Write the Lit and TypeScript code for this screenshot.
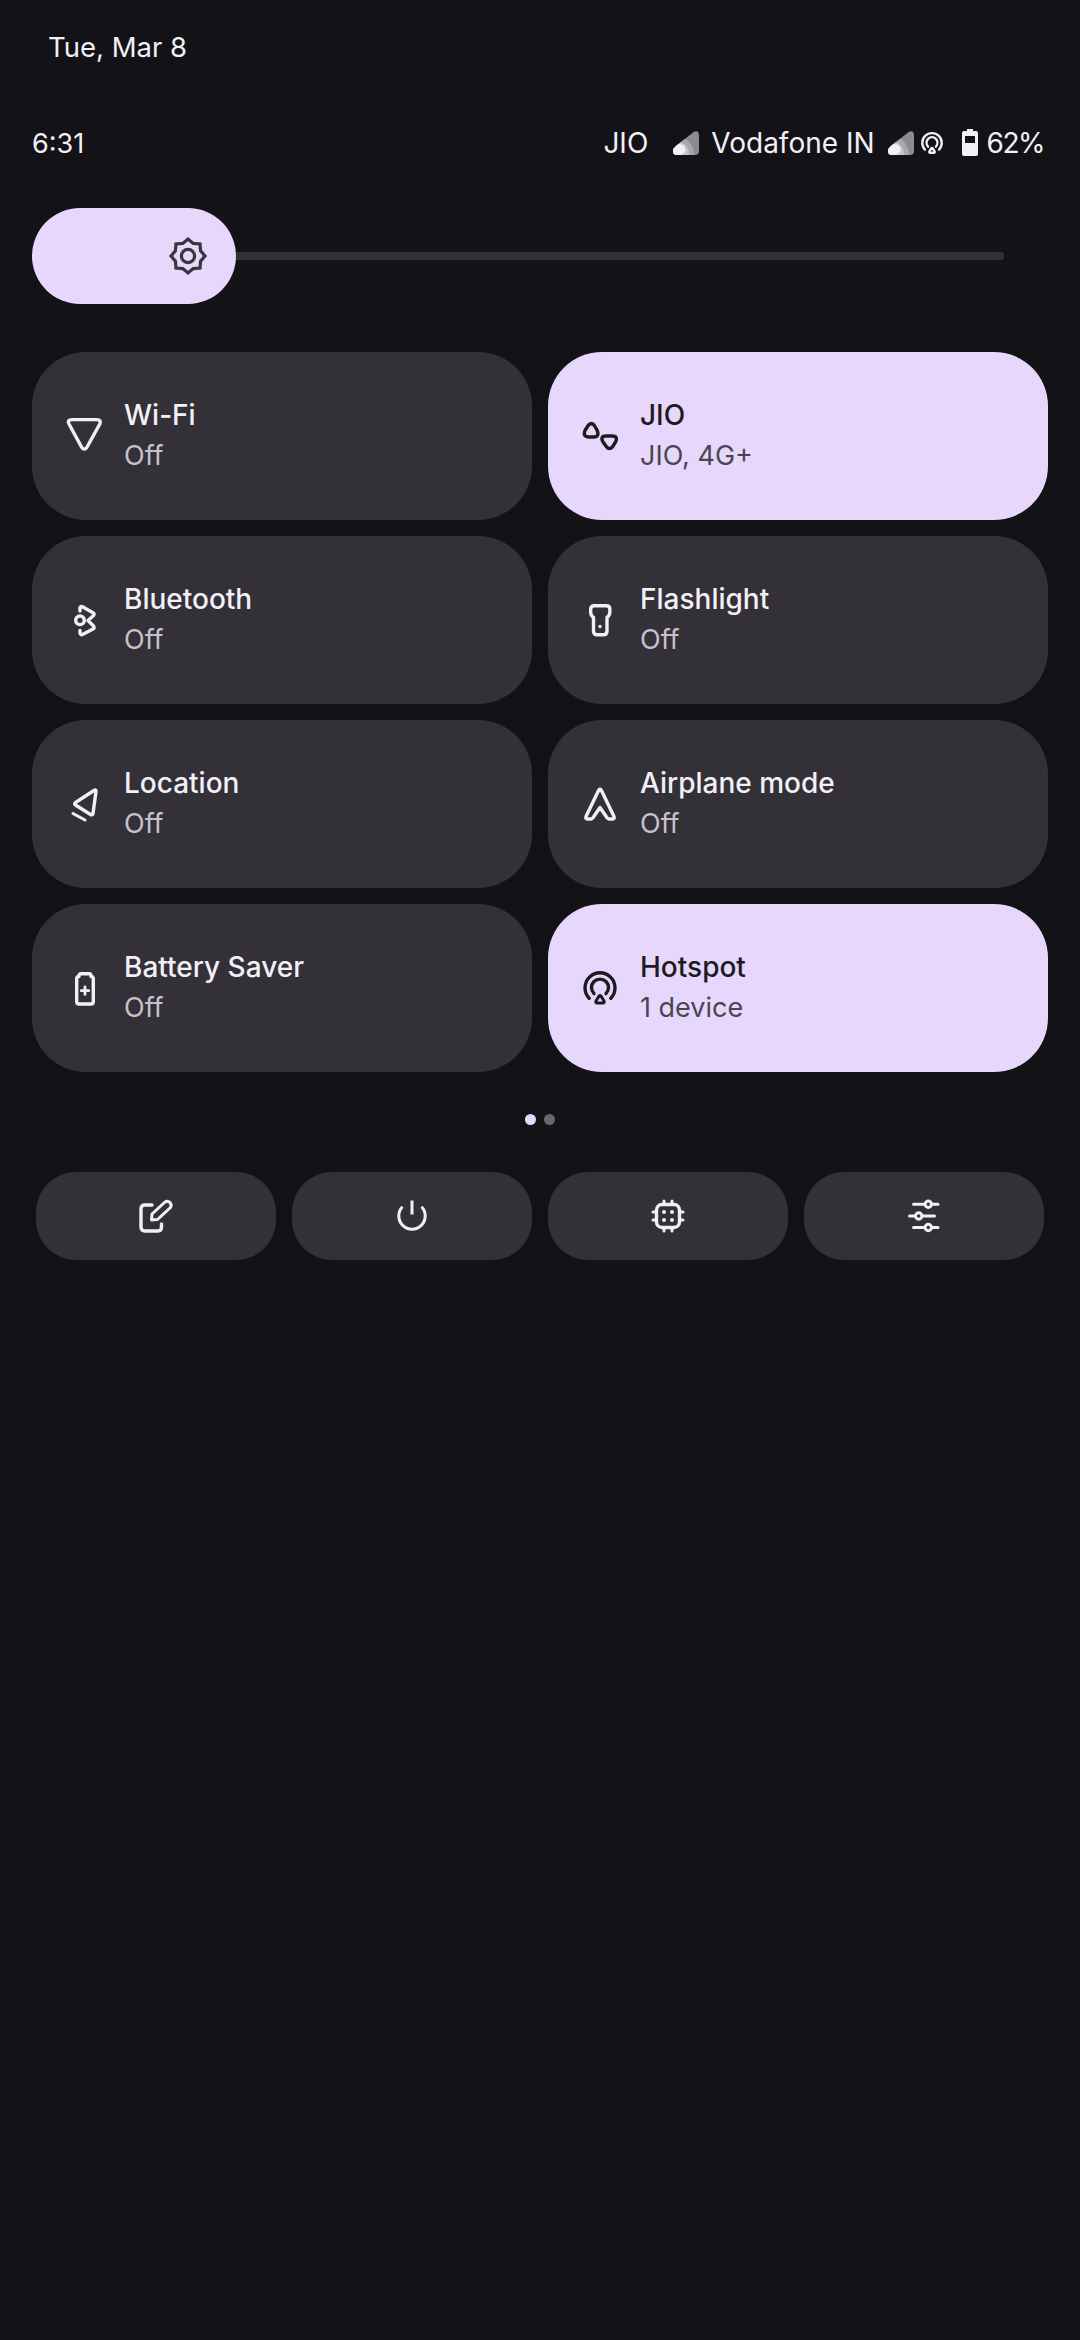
import { LitElement, html, css, svg } from "lit";
import { customElement } from "lit/decorators.js";

const s = (body: unknown) => html`<svg viewBox="0 0 40 40" width="40" height="40" fill="none" stroke="currentColor" stroke-width="3.4" stroke-linecap="round" stroke-linejoin="round">${body}</svg>`;

const icons: Record<string, unknown> = {
  wifi: s(svg`<path d="M8 3.600H32.500Q37.800 3.600 35.800 8L22.800 31.500Q20.300 34.800 17.800 31.500L5 8Q2.800 3.600 8 3.600Z"/>`),
  jio: s(svg`<path d="M8.500 9Q11.500 6.300 14 9L17 14Q20 21 13.500 21H9Q2.500 21 5 14.500Z"/><path d="M26 20H32Q38.500 20 35.500 26L32.500 30.800Q29.500 34.300 26.500 30.800L23 26Q19.800 20 26 20Z"/>`),
  bluetooth: s(svg`<circle cx="16" cy="20.300" r="4.300"/><path d="M16 11V8Q16.500 5.800 18.500 6.800L29 12.800Q31 14 29.500 15.500L24 20.500L29.500 26Q31 27.800 29 29L18.500 34.500Q16.500 35.300 16 33V30.500"/>`),
  flashlight: s(svg`<path d="M14 5.800H26.500Q29.800 5.800 29.800 9V12.500Q29.800 15.500 27 17.500V31Q27 34.800 23.500 34.800H17Q13.500 34.800 13.500 31V17.500Q10.700 15.500 10.700 12.500V9Q10.700 5.800 14 5.800Z"/><circle cx="20" cy="26.500" r="1.700" fill="currentColor" stroke="none"/>`),
  location: s(svg`<path d="M30 6.500Q32 5 32 7.500L29 29.500Q28.500 31.500 26.500 30.500L11.500 21Q9.800 19.800 11.500 18.500Z"/><path d="M9 29.500L21 36" stroke-width="3"/>`),
  airplane: s(svg`<path d="M18.800 6Q20 4.500 21.200 6L34 32.500Q34.800 35 32.500 35H28.800Q27.800 35 27.200 34L20 23.500L12.800 34Q12.200 35 11.200 35H7.500Q5.200 35 6 32.500Z"/>`),
  battery: s(svg`<path d="M16.500 5.800H25.500Q27 5.800 27 8.500H27.500Q29.300 9 29.300 11V33.500Q29.300 36 27 36H15Q12.700 36 12.700 33.500V11Q12.700 9 14.500 8.500H15Q15 5.800 16.500 5.800Z"/><path d="M21 19V26.400M17.300 22.700H24.700" stroke-width="2.800"/>`),
  hotspot: s(svg`<path d="M9.200 30.200A15 15 0 1 1 30.800 30.200"/><path d="M14 25.600A8.500 8.500 0 1 1 26 25.600"/><path d="M19 28Q20 26.800 21 28L24 33Q24.800 35 22.800 35H17.200Q15.200 35 16 33Z" stroke-width="3"/>`),
  edit: s(svg`<path d="M16 9H9Q5 9 5 13V31Q5 35 9 35H22Q25.500 35 25.500 31V28"/><path d="M15.500 24L16 18L29 6Q31.500 4.500 34 6.500Q36 9 34.500 11.500L21.500 23.500Z" stroke-width="3"/>`),
  power: s(svg`<path d="M10.500 10.800A13.200 13.200 0 1 0 29.500 10.800" stroke-linecap="butt" stroke-width="3"/><path d="M20 4.500V18.500" stroke-width="3" stroke-linecap="butt"/>`),
  cpu: s(svg`<rect x="8.500" y="8.500" width="23" height="23" rx="5.500"/><path d="M16 5V8M24 5V8M16 32V35M24 32V35M5 16H8M5 24H8M32 16H35M32 24H35" stroke-width="3"/><g fill="currentColor" stroke="none"><circle cx="16" cy="16" r="2"/><circle cx="24" cy="16" r="2"/><circle cx="16" cy="24" r="2"/><circle cx="24" cy="24" r="2"/></g>`),
  sliders: s(svg`<path d="M9.500 8.300H34M5.500 20H30.500M9.500 31.500H34" stroke-width="3"/><g fill="#333137" stroke-width="3"><circle cx="24.300" cy="8.300" r="3.200"/><circle cx="14.700" cy="20" r="3.200"/><circle cx="24.300" cy="31.500" r="3.200"/></g>`),
};

const starPoints = Array.from({ length: 16 }, (_, i) => {
  const r = i % 2 ? 13.6 : 17;
  const a = (i * Math.PI) / 8 - Math.PI / 2;
  return `${(20 + r * Math.cos(a)).toFixed(2)},${(20 + r * Math.sin(a)).toFixed(2)}`;
}).join(" ");

const signal = (id: string, cls: string) => html`<svg class=${cls} viewBox="0 0 26 24" width="26" height="24">
  <defs><clipPath id=${id}><path d="M0 20Q0 17.500 3 15L20 1.500Q26 -2 26 5V20Q26 24 22 24H4Q0 24 0 20Z"/></clipPath></defs>
  <g clip-path="url(#${id})">
    <rect width="26" height="24" fill="#8c8b90"/>
    <ellipse cx="3" cy="24" rx="18" ry="19" fill="#a9a8ac"/>
    <ellipse cx="3" cy="24" rx="13" ry="14" fill="#c8c7cb"/>
    <ellipse cx="6" cy="18.500" rx="6.500" ry="5.500" fill="#f3eff7"/>
    <rect x="0" y="19" width="7" height="5" fill="#f3eff7"/>
  </g>
</svg>`;

const tiles = [
  { icon: "wifi", title: "Wi-Fi", sub: "Off", on: false },
  { icon: "jio", title: "JIO", sub: "JIO, 4G+", on: true },
  { icon: "bluetooth", title: "Bluetooth", sub: "Off", on: false },
  { icon: "flashlight", title: "Flashlight", sub: "Off", on: false },
  { icon: "location", title: "Location", sub: "Off", on: false },
  { icon: "airplane", title: "Airplane mode", sub: "Off", on: false },
  { icon: "battery", title: "Battery Saver", sub: "Off", on: false },
  { icon: "hotspot", title: "Hotspot", sub: "1 device", on: true },
];

@customElement("app-root")
export class AppRoot extends LitElement {
  static styles = css`
    :host {
      display: block;
      min-height: 2340px;
      background: #131217;
      color: #f3eff7;
      font-family: "Inter", "Roboto", sans-serif;
      font-size: 28px;
    }

    .date {
      height: 94px;
      padding-left: 48px;
      font-size: 27.5px;
      display: flex;
      align-items: center;
    }

    .status {
      height: 98px;
      padding: 0 36px 0 32px;
      display: flex;
      align-items: center;
    }

    .time {
      flex: 1;
      font-size: 27px;
    }

    .status-right {
      display: flex;
      align-items: center;
    }

    .percent {
      letter-spacing: -1.5px;
    }

    .sig-first {
      margin: 0 12px 0 25px;
    }

    .sig-second {
      margin: 0 5px 0 13px;
    }

    .hot-small {
      display: block;
      width: 26px;
      height: 26px;
    }

    .bat-small {
      display: block;
      width: 16px;
      height: 25px;
      margin: 1px 9px 0 17px;
      background: #f3eff7;
      border-radius: 2px;
      position: relative;
    }

    .bat-small::before {
      content: "";
      position: absolute;
      top: -2px;
      left: 5px;
      width: 6px;
      height: 2px;
      background: #f3eff7;
    }

    .bat-small::after {
      content: "";
      position: absolute;
      top: 5px;
      left: 3px;
      right: 3px;
      height: 7px;
      background: #131217;
    }

    .brightness {
      margin: 16px 76px 0 32px;
      height: 96px;
      display: flex;
      align-items: center;
    }

    .thumb {
      width: 204px;
      height: 96px;
      flex: none;
      box-sizing: border-box;
      padding-right: 28px;
      border-radius: 48px;
      background: #e8d7fd;
      color: #38353d;
      display: flex;
      align-items: center;
      justify-content: flex-end;
    }

    .track {
      flex: 1;
      height: 8px;
      background: #333137;
      border-radius: 0 4px 4px 0;
    }

    .grid {
      margin: 48px 32px 0;
      display: grid;
      grid-template-columns: 1fr 1fr;
      gap: 16px;
    }

    .tile {
      height: 168px;
      border-radius: 54px;
      background: #333137;
      padding-left: 32px;
      display: flex;
      align-items: center;
      gap: 20px;
    }

    .tile.on {
      background: #e8d7fd;
      color: #1d1b20;
    }

    .tile svg {
      flex: none;
    }

    .text {
      margin-top: -1px;
    }

    .title {
      font-weight: 500;
      line-height: 40px;
    }

    .sub {
      margin-top: 1px;
      font-size: 27px;
      line-height: 40px;
      color: #c6c1cd;
    }

    .on .sub {
      color: #4a4650;
    }

    .dots {
      margin-top: 42px;
      height: 11px;
      display: flex;
      justify-content: center;
      gap: 8px;
    }

    .dots span {
      width: 11px;
      height: 11px;
      border-radius: 50%;
      background: #6a6475;
    }

    .dots span.active {
      background: #e8d7fd;
    }

    .actions {
      margin: 47px 36px 0;
      display: grid;
      grid-template-columns: repeat(4, 1fr);
      gap: 16px;
    }

    .action {
      height: 88px;
      border-radius: 40px;
      background: #333137;
      display: flex;
      align-items: center;
      justify-content: center;
    }
  `;

  render() {
    return html`
      <div class="date">Tue, Mar 8</div>
      <div class="status">
        <span class="time">6:31</span>
        <div class="status-right">
          <span>JIO</span>
          ${signal("sig-a", "sig-first")}
          <span>Vodafone IN</span>
          ${signal("sig-b", "sig-second")}
          <svg class="hot-small" viewBox="0 0 40 40" fill="none" stroke="currentColor" stroke-width="3.600" stroke-linecap="round" stroke-linejoin="round">
            <path d="M9.200 30.200A15 15 0 1 1 30.800 30.200"/><path d="M14 25.600A8.500 8.500 0 1 1 26 25.600"/><path d="M19 28Q20 26.800 21 28L24 33Q24.800 35 22.800 35H17.200Q15.200 35 16 33Z"/>
          </svg>
          <span class="bat-small"></span>
          <span class="percent">62%</span>
        </div>
      </div>
      <div class="brightness">
        <div class="thumb">
          <svg viewBox="0 0 40 40" width="40" height="40" fill="none" stroke="currentColor" stroke-width="3.200">
            <polygon points=${starPoints}/><circle cx="20" cy="20" r="6.600"/>
          </svg>
        </div>
        <div class="track"></div>
      </div>
      <div class="grid">
        ${tiles.map(
          (t) => html`
            <div class="tile ${t.on ? "on" : ""}">
              ${icons[t.icon]}
              <div class="text">
                <div class="title">${t.title}</div>
                <div class="sub">${t.sub}</div>
              </div>
            </div>
          `
        )}
      </div>
      <div class="dots"><span class="active"></span><span></span></div>
      <div class="actions">
        ${["edit", "power", "cpu", "sliders"].map(
          (name) => html`<div class="action">${icons[name]}</div>`
        )}
      </div>
    `;
  }
}
